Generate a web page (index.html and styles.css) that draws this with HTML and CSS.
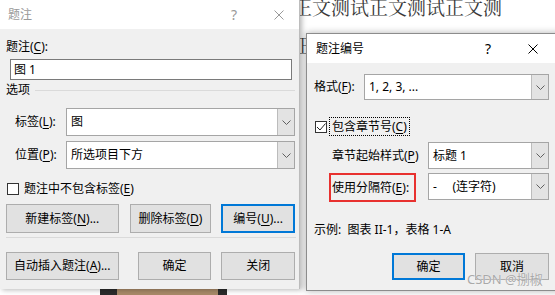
FILE: index.html
```html
<!DOCTYPE html>
<html lang="zh-CN">
<head>
  <meta charset="UTF-8" />
  <meta name="viewport" content="width=device-width, initial-scale=1.0" />
  <title>题注</title>
  <link rel="stylesheet" href="styles.css">
</head>
<body>
  <!-- document behind the dialogs -->
  <div class="doc">
    <p class="doc-line">正文测试正文测试正文测</p>
    <p class="doc-line">正</p>
    <div class="doc-pic"></div>
  </div>

  <!-- 题注 dialog (inactive) -->
  <div class="dialog caption-dlg">
    <div class="titlebar inactive">
      <span class="title">题注</span>
      <span class="help">?</span>
      <svg class="close" width="10" height="10" viewBox="0 0 10 10"><path d="M0.5 0.5L9.5 9.5M9.5 0.5L0.5 9.5" stroke="currentColor" stroke-width="1" fill="none"/></svg>
    </div>
    <div class="body">
      <div class="field-label">题注(<u>C</u>):</div>
      <div class="textbox">图 1</div>

      <div class="group"><span>选项</span><span class="group-line"></span></div>

      <div class="row">
        <span class="row-label">标签(<u>L</u>):</span>
        <div class="select wide">
          <span class="value">图</span>
          <span class="drop"><svg width="9" height="5" viewBox="0 0 9 5"><path d="M0.5 0.5L4.5 4.5L8.5 0.5" stroke="#606060" fill="none"/></svg></span>
        </div>
      </div>
      <div class="row next">
        <span class="row-label">位置(<u>P</u>):</span>
        <div class="select wide">
          <span class="value">所选项目下方</span>
          <span class="drop"><svg width="9" height="5" viewBox="0 0 9 5"><path d="M0.5 0.5L4.5 4.5L8.5 0.5" stroke="#606060" fill="none"/></svg></span>
        </div>
      </div>

      <div class="check-row">
        <span class="cb"></span>
        <span>题注中不包含标签(<u>E</u>)</span>
      </div>

      <div class="btn-row">
        <button class="btn w113">新建标签(<u>N</u>)...</button>
        <button class="btn w82 gap11">删除标签(<u>D</u>)</button>
        <button class="btn w74 gap10 default">编号(<u>U</u>)...</button>
      </div>
      <div class="sep"></div>
      <div class="btn-row bottom">
        <button class="btn w113">自动插入题注(<u>A</u>)...</button>
        <button class="btn w74 gap19">确定</button>
        <button class="btn w74 gap10">关闭</button>
      </div>
    </div>
  </div>

  <!-- 题注编号 dialog (active) -->
  <div class="dialog number-dlg">
    <div class="titlebar">
      <span class="title">题注编号</span>
      <span class="help">?</span>
      <svg class="close" width="10" height="10" viewBox="0 0 10 10"><path d="M0.5 0.5L9.5 9.5M9.5 0.5L0.5 9.5" stroke="currentColor" stroke-width="1" fill="none"/></svg>
    </div>
    <div class="body">
      <div class="row fmt">
        <span class="row-label">格式(<u>F</u>):</span>
        <div class="select">
          <span class="value">1, 2, 3, ...</span>
          <span class="drop"><svg width="9" height="5" viewBox="0 0 9 5"><path d="M0.5 0.5L4.5 4.5L8.5 0.5" stroke="#606060" fill="none"/></svg></span>
        </div>
      </div>

      <div class="check-row chapter">
        <span class="cb checked"><svg width="10" height="10" viewBox="0 0 10 10"><path d="M1 5L4 8L9.5 1.5" stroke="#222" stroke-width="1" fill="none"/></svg></span>
        <span class="focus">包含章节号(<u>C</u>)</span>
      </div>

      <div class="row sub">
        <span class="row-label">章节起始样式(<u>P</u>)</span>
        <div class="select">
          <span class="value">标题 1</span>
          <span class="drop"><svg width="9" height="5" viewBox="0 0 9 5"><path d="M0.5 0.5L4.5 4.5L8.5 0.5" stroke="#606060" fill="none"/></svg></span>
        </div>
      </div>
      <div class="row sep-row">
        <span class="marked">使用分隔符(<u>E</u>):</span>
        <div class="select">
          <span class="value">-     (连字符)</span>
          <span class="drop"><svg width="9" height="5" viewBox="0 0 9 5"><path d="M0.5 0.5L4.5 4.5L8.5 0.5" stroke="#606060" fill="none"/></svg></span>
        </div>
      </div>

      <div class="sample">示例:&nbsp; 图表 II-1，表格 1-A</div>

      <div class="btn-row actions">
        <button class="btn ok default">确定</button>
        <button class="btn cancel">取消</button>
      </div>
    </div>
  </div>

  <div class="watermark">CSDN @捌椒</div>
</body>
</html>
```

FILE: styles.css
```css
* {
  box-sizing: border-box;
}
html, body {
  margin: 0;
}
body {
  position: relative;
  width: 555px;
  height: 295px;
  overflow: hidden;
  background: #fff;
  color: #000;
  font-family: "Noto Sans", "Noto Sans CJK SC", sans-serif;
  font-size: 12px;
  line-height: 16px;
}
u {
  text-decoration-thickness: 1px;
  text-underline-offset: 2px;
}

/* document */
.doc {
  padding-left: 293px;
}
.doc-line {
  margin: 19px 0 0;
  font-family: "Noto Serif CJK SC", "Noto Sans CJK SC", serif;
  font-size: 19px;
  line-height: 19px;
  color: #3a3a3a;
  white-space: nowrap;
}
.doc-line:first-child {
  margin-top: -3px;
}
.doc-pic {
  position: absolute;
  left: 100px;
  top: 287px;
  width: 127px;
  height: 30px;
  background: #a88a68;
  border: 0 solid #2b2b2b;
  border-left-width: 17px;
  border-right-width: 9px;
}

/* dialogs */
.dialog {
  position: absolute;
  display: flex;
  flex-direction: column;
  background: #f0f0f0;
}
.caption-dlg {
  left: 0;
  top: 0;
  width: 300px;
  height: 289px;
  border-right: 1px solid #bdbdbd;
  box-shadow: 2px 1px 5px rgba(0, 0, 0, 0.28);
}
.number-dlg {
  left: 306px;
  top: 33px;
  width: 262px;
  height: 258px;
  border: 1px solid #8c8c8c;
  box-shadow: 0 0 7px rgba(0, 0, 0, 0.3);
}
.titlebar {
  flex: none;
  display: flex;
  align-items: center;
  height: 29px;
  padding: 0 15px 0 8px;
  background: #fff;
}
.number-dlg .titlebar {
  padding: 0 29px 0 9px;
}
.titlebar.inactive {
  color: #999;
}
.title {
  flex: 1;
}
.help {
  width: 14px;
  text-align: center;
  font-size: 14px;
}
.close {
  margin-left: 33px;
}

/* 题注 body */
.caption-dlg .body {
  padding: 10px 4px 0 6px;
}
.textbox {
  width: 282px;
  height: 21px;
  margin: 4px 0 0 4px;
  padding-left: 3px;
  border: 1px solid #7a7a7a;
  background: #fff;
  line-height: 19px;
}
.group {
  display: flex;
  align-items: center;
  gap: 5px;
  margin-top: 2px;
}
.group-line {
  flex: 1;
  border-top: 1px solid #dadada;
}
.row {
  display: flex;
  align-items: center;
  margin-top: 10px;
  padding-left: 9px;
}
.row.next {
  margin-top: 5px;
}
.row-label {
  width: 51px;
  flex: none;
}
.select {
  display: flex;
  width: 185px;
  height: 26px;
  border: 1px solid #a5a5a5;
  background: #fff;
}
.select.wide {
  width: 230px;
  height: 28px;
}
.select .value {
  flex: 1;
  display: flex;
  align-items: center;
  padding-left: 4px;
  white-space: pre;
}
.select .drop {
  width: 17px;
  display: flex;
  align-items: center;
  justify-content: center;
  background: #e3e3e3;
  border-left: 1px solid #bcbcbc;
}
.check-row {
  display: flex;
  align-items: center;
  gap: 5px;
  margin-top: 12px;
  padding-left: 1px;
}
.cb {
  width: 12px;
  height: 12px;
  flex: none;
  border: 1px solid #333;
  background: #fff;
  display: flex;
  align-items: center;
  justify-content: center;
}
.btn-row {
  display: flex;
  margin-top: 7px;
}
.btn-row.bottom {
  margin-top: 14px;
}
.btn {
  height: 29px;
  padding: 0;
  border: 1px solid #adadad;
  background: #e1e1e1;
  color: #000;
  font: inherit;
}
.btn-row.bottom .btn {
  height: 28px;
}
.btn.default {
  border: 2px solid #0078d7;
}
.w113 { width: 113px; }
.w82 { width: 82px; }
.w74 { width: 74px; }
.gap10 { margin-left: 10px; }
.gap11 { margin-left: 11px; }
.gap19 { margin-left: 19px; }
.sep {
  width: 290px;
  margin-top: 4px;
  border-top: 1px solid #dadada;
}

/* 题注编号 body */
.number-dlg .body {
  padding: 11px 0 0 7px;
}
.row.fmt {
  margin-top: 0;
  padding-left: 0;
}
.row.fmt .row-label {
  width: 50px;
}
.check-row.chapter {
  margin-top: 17px;
  gap: 2px;
}
.focus {
  height: 19px;
  padding: 0 2px;
  border: 1px dotted #000;
  line-height: 17px;
}
.row.sub {
  margin-top: 6px;
  padding-left: 18px;
}
.row.sub .row-label {
  width: 96px;
}
.row.sub .select,
.row.sep-row .select {
  width: 121px;
  height: 27px;
}
.row.sep-row {
  margin-top: 4px;
  padding-left: 15px;
  align-items: flex-start;
}
.marked {
  width: 87px;
  height: 29px;
  padding-left: 1px;
  border: 2px solid #e8312f;
  line-height: 25px;
}
.row.sep-row .select {
  margin-left: 12px;
}
.sample {
  margin-top: 20px;
}
.btn-row.actions {
  margin-top: 15px;
  padding-left: 78px;
}
.btn.ok {
  width: 73px;
  height: 27px;
}
.btn.cancel {
  width: 74px;
  height: 27px;
  margin-left: 10px;
}

.watermark {
  position: absolute;
  left: 467px;
  top: 271px;
  font-size: 13px;
  color: #a9a9a9;
  text-shadow: 0 0 1px #fff;
  white-space: nowrap;
}
```
